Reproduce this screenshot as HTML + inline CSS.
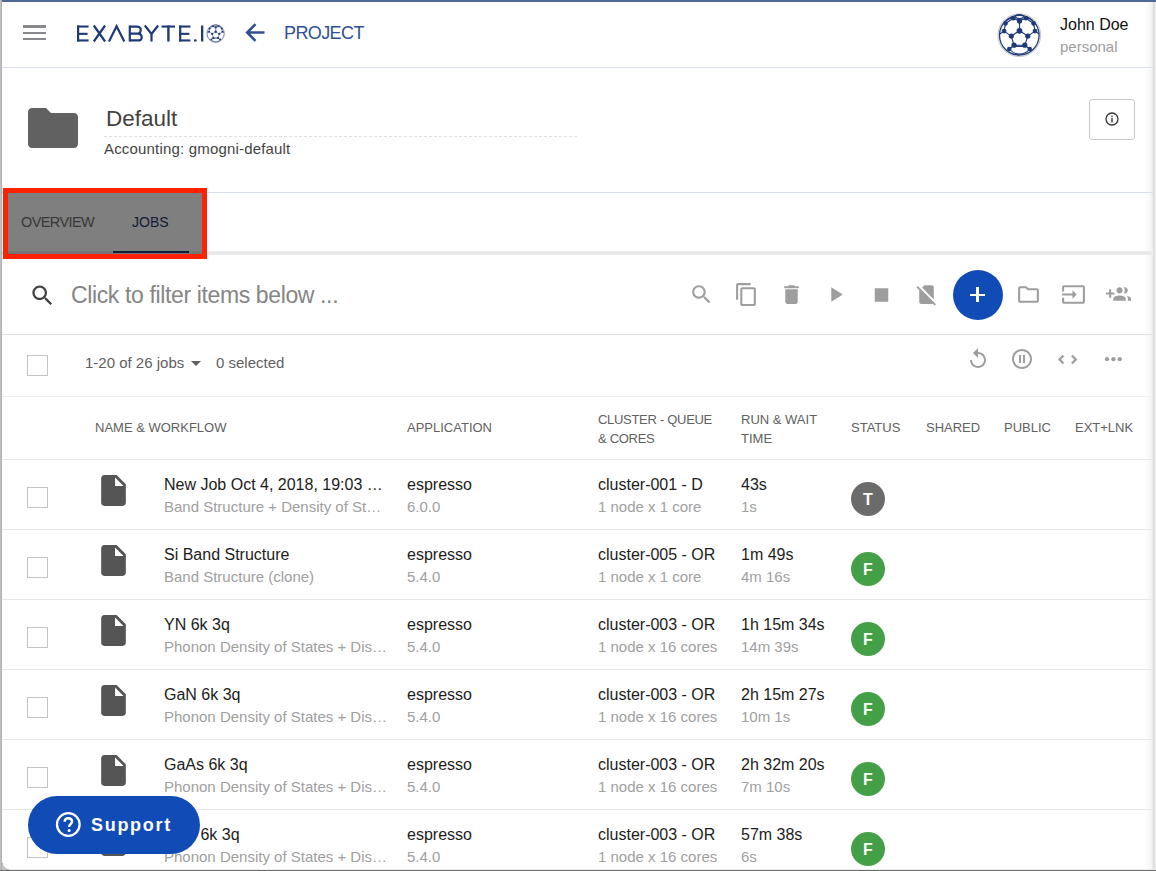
<!DOCTYPE html>
<html><head><meta charset="utf-8">
<style>
html,body{margin:0;padding:0;}
body{width:1156px;height:871px;overflow:hidden;position:relative;background:#fff;font-family:"Liberation Sans",sans-serif;color:#212121;}
.a{position:absolute;}
.t{position:absolute;white-space:nowrap;line-height:1;}
.hl{position:absolute;left:2px;width:1152px;height:1px;}
svg{position:absolute;overflow:visible;}
.ic{fill:#9e9e9e;}
.cb{position:absolute;width:19px;height:19px;border:1px solid #c4c4c4;background:#fff;}
.fi{position:absolute;width:25px;height:31px;}
.n1{font-size:16px;color:#1c1c1c;}
.n2{font-size:15px;color:#a0a0a0;}
.hd{font-size:13px;color:#616161;}
.st{position:absolute;width:34px;height:34px;border-radius:50%;background:#43a047;color:#fff;font-size:16px;font-weight:bold;text-align:center;line-height:35px;}
</style></head>
<body>

<!-- window frame -->
<div class="a" style="left:0;top:0;width:1156px;height:2px;background:#506a98;"></div>
<div class="a" style="left:0;top:0;width:2px;height:871px;background:linear-gradient(to right,#c8c8c8,#a8a8a8);"></div>
<div class="a" style="left:1144px;top:2px;width:12px;height:869px;background:linear-gradient(to right,rgba(0,0,0,0),rgba(0,0,0,0.04) 60%,rgba(0,0,0,0.14) 85%,rgba(0,0,0,0.03));"></div>
<div class="a" style="left:2px;top:869px;width:1154px;height:1px;background:#ececec;"></div><div class="a" style="left:0;top:870px;width:1156px;height:1px;background:#6e6e6e;"></div><div class="a" style="left:2px;top:863px;width:7px;height:7px;background:radial-gradient(circle at 100% 0,#fff 0,#fff 5.5px,#b8b8b8 6.5px,#c4c4c4 7px);"></div>

<!-- header -->
<div class="a" style="left:23px;top:25px;width:23px;height:3px;background:#88898d;"></div>
<div class="a" style="left:23px;top:32px;width:23px;height:2px;background:#88898d;"></div>
<div class="a" style="left:23px;top:38px;width:23px;height:2px;background:#88898d;"></div>

<svg style="left:72px;top:20px" width="160" height="26" viewBox="0 0 160 26">
<g fill="#1f3a78">
<rect x="5" y="5.5" width="2.2" height="16"/><rect x="5" y="5.5" width="11.6" height="2.1"/><rect x="5" y="12.8" width="10.6" height="2.1"/><rect x="5" y="19.4" width="11.6" height="2.1"/>
<rect x="56.7" y="5.5" width="2.2" height="16"/>
<rect x="89.5" y="5.5" width="13.5" height="2.1"/><rect x="95.2" y="5.5" width="2.4" height="16"/>
<rect x="107.1" y="5.5" width="2.2" height="16"/><rect x="107.1" y="5.5" width="11.3" height="2.1"/><rect x="107.1" y="12.8" width="10.3" height="2.1"/><rect x="107.1" y="19.4" width="11.3" height="2.1"/>
<rect x="122" y="19.4" width="2.6" height="2.1"/>
<rect x="129" y="5.5" width="2.3" height="16"/>
</g>
<g fill="none" stroke="#1f3a78" stroke-width="2.2">
<path d="M21.8 5.5L33.1 21.5 M33.1 5.5L21.8 21.5"/>
<path d="M37 21.5L44.6 6.2 52.3 21.5"/>
<path d="M57.8 6.55H64.8C67.6 6.55 68.7 8.3 68.7 10 C68.7 11.9 67.4 13.7 64.8 13.7H57.8 M57.8 13.7H65.8C68.6 13.7 69.7 15.6 69.7 17.4C69.7 19.3 68.4 20.45 65.8 20.45H57.8"/>
<path d="M72.8 5.5L79.5 13.9 86.2 5.5 M79.5 13.9V21.5"/>
</g>
</svg>
<svg style="left:206px;top:24px" width="19" height="19" viewBox="0 0 44 44">
<circle cx="22.3" cy="22.2" r="21.4" fill="#fff" stroke="#bdbdbd" stroke-width="0.9"/>
<circle cx="22.3" cy="22.2" r="19.8" fill="none" stroke="#1f3a78" stroke-width="1.3"/>
<g fill="none" stroke="#1f3a78" stroke-width="1.15">
<path d="M22.5 17.8L30.8 23.1 27.8 32.2 17 32.2 14.3 23.1Z"/>
<path d="M22.5 17.8V7.9 M22.5 7.9L16.2 5.2 M22.5 7.9L28.9 5.2 M16.2 5.2L8.5 10.4 M28.9 5.2L36.6 10.4 M8.5 10.4L7.1 18.1 M36.6 10.4L38 18.1 M7.1 18.1L14.3 23.1 M38 18.1L30.8 23.1 M17 32.2L12.3 36 M27.8 32.2L32.7 36 M7.1 18.1L3 21 M38 18.1L42 21"/>
<ellipse cx="22.5" cy="3.6" rx="4" ry="2"/>
<path d="M9.6 7.5L15 4.2 M35.4 7.5L30 4.2 M17 33.3H27.8 M12.3 36C15 39.5 19 41 22.5 41C26 41 30 39.5 32.7 36"/>
</g>
<g fill="#1f3a78">
<circle cx="22.5" cy="17.8" r="2.9"/><circle cx="30.8" cy="23.1" r="2.6"/><circle cx="27.8" cy="32.2" r="2.6"/><circle cx="17" cy="32.2" r="2.6"/><circle cx="14.3" cy="23.1" r="2.6"/>
<circle cx="22.5" cy="7.9" r="2.6"/><circle cx="16.2" cy="5.2" r="2.3"/><circle cx="28.9" cy="5.2" r="2.3"/><circle cx="8.5" cy="10.4" r="2.3"/><circle cx="36.6" cy="10.4" r="2.3"/>
<circle cx="7.1" cy="18.1" r="2.4"/><circle cx="38" cy="18.1" r="2.4"/><circle cx="12.3" cy="36" r="2.3"/><circle cx="32.7" cy="36" r="2.3"/>
</g></svg>

<svg style="left:245px;top:23px" width="20" height="19" viewBox="0 0 20 19"><path d="M19.5 9.5H2.5 M10.5 1.2L2.2 9.5 10.5 17.8" fill="none" stroke="#2f5192" stroke-width="2.6"/></svg>
<div class="t" style="left:284px;top:23.5px;font-size:18px;letter-spacing:-0.6px;color:#2f5192;">PROJECT</div>

<svg style="left:997px;top:13px" width="44" height="44" viewBox="0 0 44 44">
<circle cx="22.3" cy="22.2" r="21.4" fill="#fff" stroke="#bdbdbd" stroke-width="0.9"/>
<circle cx="22.3" cy="22.2" r="19.8" fill="none" stroke="#1f3a78" stroke-width="1.3"/>
<g fill="none" stroke="#1f3a78" stroke-width="1.15">
<path d="M22.5 17.8L30.8 23.1 27.8 32.2 17 32.2 14.3 23.1Z"/>
<path d="M22.5 17.8V7.9 M22.5 7.9L16.2 5.2 M22.5 7.9L28.9 5.2 M16.2 5.2L8.5 10.4 M28.9 5.2L36.6 10.4 M8.5 10.4L7.1 18.1 M36.6 10.4L38 18.1 M7.1 18.1L14.3 23.1 M38 18.1L30.8 23.1 M17 32.2L12.3 36 M27.8 32.2L32.7 36 M7.1 18.1L3 21 M38 18.1L42 21"/>
<ellipse cx="22.5" cy="3.6" rx="4" ry="2"/>
<path d="M9.6 7.5L15 4.2 M35.4 7.5L30 4.2 M17 33.3H27.8 M12.3 36C15 39.5 19 41 22.5 41C26 41 30 39.5 32.7 36"/>
</g>
<g fill="#1f3a78">
<circle cx="22.5" cy="17.8" r="2.9"/><circle cx="30.8" cy="23.1" r="2.6"/><circle cx="27.8" cy="32.2" r="2.6"/><circle cx="17" cy="32.2" r="2.6"/><circle cx="14.3" cy="23.1" r="2.6"/>
<circle cx="22.5" cy="7.9" r="2.6"/><circle cx="16.2" cy="5.2" r="2.3"/><circle cx="28.9" cy="5.2" r="2.3"/><circle cx="8.5" cy="10.4" r="2.3"/><circle cx="36.6" cy="10.4" r="2.3"/>
<circle cx="7.1" cy="18.1" r="2.4"/><circle cx="38" cy="18.1" r="2.4"/><circle cx="12.3" cy="36" r="2.3"/><circle cx="32.7" cy="36" r="2.3"/>
</g></svg>
<div class="t" style="left:1060px;top:17px;font-size:16px;color:#111;">John Doe</div>
<div class="t" style="left:1060px;top:39px;font-size:15px;color:#9e9e9e;">personal</div>

<div class="hl" style="top:67px;background:#d7dee8;"></div>

<!-- project info -->
<svg style="left:28px;top:108px" width="50" height="40" viewBox="0 0 50 40"><path d="M4 0H18L23 5H46C48.2 5 50 6.8 50 9V36C50 38.2 48.2 40 46 40H4C1.8 40 0 38.2 0 36V4C0 1.8 1.8 0 4 0Z" fill="#616161"/></svg>
<div class="t" style="left:106px;top:108px;font-size:22.5px;color:#424242;">Default</div>
<div class="a" style="left:104px;top:136px;width:474px;height:1px;background:repeating-linear-gradient(to right,#e0e0e0 0 3px,transparent 3px 5px);"></div>
<div class="t" style="left:104px;top:141px;font-size:15px;letter-spacing:0.18px;color:#444;">Accounting: gmogni-default</div>
<div class="a" style="left:1089px;top:99px;width:44px;height:39px;border:1px solid #c8c8c8;border-radius:3px;"></div>
<svg style="left:1105px;top:112px" width="14" height="14" viewBox="0 0 14 14"><circle cx="7" cy="7" r="6" fill="none" stroke="#333" stroke-width="1.3"/><rect x="6.3" y="5.8" width="1.4" height="4.6" fill="#333"/><rect x="6.3" y="3.4" width="1.4" height="1.4" fill="#333"/></svg>

<div class="hl" style="top:192px;background:#d7dee8;"></div>

<!-- tabs -->
<div class="t" style="left:21px;top:214.5px;font-size:14.5px;letter-spacing:-0.6px;color:#727272;">OVERVIEW</div>
<div class="t" style="left:132px;top:215px;font-size:14px;color:#1f3a6e;">JOBS</div>
<div class="a" style="left:113px;top:251px;width:76px;height:2px;background:#1f3a6e;"></div>
<div class="a" style="left:2px;top:251px;width:1152px;height:4px;background:linear-gradient(#f2f2f2,#e8e8e8 30%,#e8e8e8 80%,#f0f0f0);"></div>
<div class="a" style="left:113px;top:251px;width:76px;height:2px;background:#1f3a6e;"></div>
<div class="a" style="left:3px;top:187.7px;width:194px;height:61.5px;border:5px solid #ff2200;background:rgba(0,0,0,0.5);"></div>

<!-- search row -->
<svg style="left:28.7px;top:281.8px" width="27" height="27" viewBox="0 0 24 24"><path fill="#424242" d="M15.5 14h-.79l-.28-.27C15.41 12.59 16 11.11 16 9.5 16 5.91 13.09 3 9.5 3S3 5.91 3 9.5 5.91 16 9.5 16c1.61 0 3.09-.59 4.23-1.57l.27.28v.79l5 4.99L20.49 19l-4.99-5zm-6 0C7.01 14 5 11.99 5 9.5S7.01 5 9.5 5 14 7.01 14 9.5 11.99 14 9.5 14z"/></svg>
<div class="t" style="left:71px;top:284.2px;font-size:23px;letter-spacing:-0.37px;color:#858585;">Click to filter items below ...</div>

<svg style="left:689.00px;top:281.80px" width="25" height="25" viewBox="0 0 24 24"><path class="ic" d="M15.5 14h-.79l-.28-.27C15.41 12.59 16 11.11 16 9.5 16 5.910 13.09 3 9.5 3S3 5.91 3 9.5 5.91 16 9.5 16c1.61 0 3.09-.59 4.23-1.57l.27.28v.79l5 4.99L20.49 19l-4.99-5zm-6 0C7.01 14 5 11.99 5 9.5S7.01 5 9.5 5 14 7.01 14 9.5 11.99 14 9.5 14z"/></svg>
<svg style="left:733.50px;top:281.80px" width="25" height="25" viewBox="0 0 24 24"><path class="ic" d="M16 1H4c-1.1 0-2 .9-2 2v14h2V3h12V1zm3 4H8c-1.1 0-2 .9-2 2v14c0 1.1.9 2 2 2h11c1.1 0 2-.9 2-2V7c0-1.1-.9-2-2-2zm0 16H8V7h11v14z"/></svg>
<svg style="left:778.50px;top:281.80px" width="25" height="25" viewBox="0 0 24 24"><path class="ic" d="M6 19c0 1.1.9 2 2 2h8c1.1 0 2-.9 2-2V7H6v12zM19 4h-3.5l-1-1h-5l-1 1H5v2h14V4z"/></svg>
<svg style="left:822.50px;top:281.80px" width="25" height="25" viewBox="0 0 24 24"><path class="ic" d="M8 5v14l11-7z"/></svg>
<svg style="left:868.50px;top:281.80px" width="25" height="25" viewBox="0 0 24 24"><path class="ic" d="M5.5 6h13v13h-13z"/></svg>
<svg style="left:913.50px;top:281.80px" width="25" height="25" viewBox="0 0 24 24"><path class="ic" d="M18.99 5c0-1.1-.89-2-1.99-2h-7L7.66 5.34 19 16.68 18.99 5zM3.65 3.88L2.38 5.15 5 7.77V19c0 1.1.9 2 2 2h10.01c.35 0 .67-.1.96-.26l1.88 1.88 1.27-1.27L3.65 3.88z"/></svg>
<div class="a" style="left:953px;top:270px;width:50px;height:50px;border-radius:50%;background:#114cb6;"></div>
<div class="a" style="left:970px;top:293.5px;width:15px;height:2.6px;background:#fff;"></div>
<div class="a" style="left:976.2px;top:287.3px;width:2.6px;height:15px;background:#fff;"></div>
<svg style="left:1016.00px;top:281.80px" width="25" height="25" viewBox="0 0 24 24"><path class="ic" d="M9.17 6l2 2H20v10H4V6h5.17M10 4H4c-1.1 0-1.99.9-1.99 2L2 18c0 1.1.9 2 2 2h16c1.1 0 2-.9 2-2V8c0-1.1-.9-2-2-2h-8l-2-2z"/></svg>
<svg style="left:1061.00px;top:281.80px" width="25" height="25" viewBox="0 0 24 24"><path class="ic" d="M21 3.01H3c-1.1 0-2 .9-2 2V9h2V4.99h18v14.03H3V15H1v4.01c0 1.1.9 1.98 2 1.98h18c1.1 0 2-.88 2-1.98v-14c0-1.11-.9-2-2-2zM11 16l4-4-4-4v3H1v2h10v3z"/></svg>
<svg style="left:1105.50px;top:281.80px" width="25" height="25" viewBox="0 0 24 24"><path class="ic" d="M8 10H5V7H3v3H0v2h3v3h2v-3h3v-2zm10 1c1.66 0 2.99-1.34 2.99-3S19.66 5 18 5c-.32 0-.63.05-.91.14.57.81.9 1.790.9 2.86s-.34 2.04-.9 2.86c.28.09.59.14.91.14zm-5 0c1.66 0 2.99-1.34 2.99-3S14.66 5 13 5c-1.66 0-3 1.34-3 3s1.34 3 3 3zm6.62 2.16c.83.73 1.38 1.66 1.38 2.84v2h3v-2c0-1.54-2.370-2.49-4.38-2.84zM13 13c-2 0-6 1-6 3v2h12v-2c0-2-4-3-6-3z"/></svg>

<div class="hl" style="top:334px;background:#e0e0e0;"></div>

<!-- selection row -->
<div class="cb" style="left:27px;top:355px;"></div>
<div class="t" style="left:85px;top:355px;font-size:15px;color:#616161;">1-20 of 26 jobs</div>
<svg style="left:191px;top:361px" width="10" height="5" viewBox="0 0 10 5"><path d="M0 0H10L5 5Z" fill="#616161"/></svg>
<div class="t" style="left:216px;top:355px;font-size:15px;color:#616161;">0 selected</div>

<svg style="left:966px;top:347.1px" width="24" height="24" viewBox="0 0 24 24"><path class="ic" d="M12 5V1L7 6l5 5V7c3.31 0 6 2.69 6 6s-2.69 6-6 6-6-2.69-6-6H4c0 4.42 3.58 8 8 8s8-3.58 8-8-3.58-8-8-8z"/></svg>
<svg style="left:1010px;top:346.7px" width="24" height="24" viewBox="0 0 24 24"><path class="ic" d="M9 16h2V8H9v8zm3-14C6.48 2 2 6.48 2 12s4.48 10 10 10 10-4.48 10-10S17.52 2 12 2zm0 18c-4.41 0-8-3.59-8-8s3.59-8 8-8 8 3.59 8 8-3.59 8-8 8zm1-4h2V8h-2v8z"/></svg>
<svg style="left:1058px;top:355px" width="19" height="9" viewBox="0 0 19 9"><path d="M5.4 0.5L1.5 4.5 5.4 8.5 M13.9 0.5L17.8 4.5 13.9 8.5" fill="none" stroke="#9e9e9e" stroke-width="2.3"/></svg>
<svg style="left:1104.8px;top:357px" width="17" height="5" viewBox="0 0 17 5"><circle cx="2" cy="2.2" r="2.1" class="ic"/><circle cx="8.4" cy="2.2" r="2.1" class="ic"/><circle cx="14.8" cy="2.2" r="2.1" class="ic"/></svg>

<div class="hl" style="top:396px;background:#eeeeee;"></div>

<!-- table header -->
<div class="t hd" style="left:95px;top:421px;">NAME &amp; WORKFLOW</div>
<div class="t hd" style="left:407px;top:421px;">APPLICATION</div>
<div class="t hd" style="left:598px;top:409.5px;line-height:19px;letter-spacing:-0.3px;">CLUSTER - QUEUE<br>&amp; CORES</div>
<div class="t hd" style="left:741px;top:409.5px;line-height:19px;">RUN &amp; WAIT<br>TIME</div>
<div class="t hd" style="left:851px;top:421px;">STATUS</div>
<div class="t hd" style="left:926px;top:421px;">SHARED</div>
<div class="t hd" style="left:1004px;top:421px;">PUBLIC</div>
<div class="t hd" style="left:1075px;top:421px;">EXT+LNK</div>

<div class="hl" style="top:459px;background:#e8e8e8;"></div>

<div id="rows">
<div class="cb" style="left:27px;top:487px;"></div>
<svg style="left:95px;top:472px" width="37" height="37" viewBox="0 0 24 24"><path fill="#555" d="M6 2c-1.1 0-1.99.9-1.99 2L4 20c0 1.1.89 2 1.99 2H18c1.1 0 2-.9 2-2V8l-6-6H6zm7 7V3.5L18.5 9H13z"/></svg>
<div class="t n1" style="left:164px;top:477px;">New Job Oct 4, 2018, 19:03 …</div>
<div class="t n2" style="left:164px;top:499px;">Band Structure + Density of St…</div>
<div class="t n1" style="left:407px;top:477px;">espresso</div>
<div class="t n2" style="left:407px;top:499px;">6.0.0</div>
<div class="t n1" style="left:598px;top:477px;">cluster-001 - D</div>
<div class="t n2" style="left:598px;top:499px;">1 node x 1 core</div>
<div class="t n1" style="left:741px;top:477px;">43s</div>
<div class="t n2" style="left:741px;top:499px;">1s</div>
<div class="st" style="left:851px;top:482px;background:#6b6b6b;">T</div>
<div class="hl" style="top:529px;background:#e8e8e8;"></div>
<div class="cb" style="left:27px;top:557px;"></div>
<svg style="left:95px;top:542px" width="37" height="37" viewBox="0 0 24 24"><path fill="#555" d="M6 2c-1.1 0-1.99.9-1.99 2L4 20c0 1.1.89 2 1.99 2H18c1.1 0 2-.9 2-2V8l-6-6H6zm7 7V3.5L18.5 9H13z"/></svg>
<div class="t n1" style="left:164px;top:547px;">Si Band Structure</div>
<div class="t n2" style="left:164px;top:569px;">Band Structure (clone)</div>
<div class="t n1" style="left:407px;top:547px;">espresso</div>
<div class="t n2" style="left:407px;top:569px;">5.4.0</div>
<div class="t n1" style="left:598px;top:547px;">cluster-005 - OR</div>
<div class="t n2" style="left:598px;top:569px;">1 node x 1 core</div>
<div class="t n1" style="left:741px;top:547px;">1m 49s</div>
<div class="t n2" style="left:741px;top:569px;">4m 16s</div>
<div class="st" style="left:851px;top:552px;background:#43a047;">F</div>
<div class="hl" style="top:599px;background:#e8e8e8;"></div>
<div class="cb" style="left:27px;top:627px;"></div>
<svg style="left:95px;top:612px" width="37" height="37" viewBox="0 0 24 24"><path fill="#555" d="M6 2c-1.1 0-1.99.9-1.99 2L4 20c0 1.1.89 2 1.99 2H18c1.1 0 2-.9 2-2V8l-6-6H6zm7 7V3.5L18.5 9H13z"/></svg>
<div class="t n1" style="left:164px;top:617px;">YN 6k 3q</div>
<div class="t n2" style="left:164px;top:639px;">Phonon Density of States + Dis…</div>
<div class="t n1" style="left:407px;top:617px;">espresso</div>
<div class="t n2" style="left:407px;top:639px;">5.4.0</div>
<div class="t n1" style="left:598px;top:617px;">cluster-003 - OR</div>
<div class="t n2" style="left:598px;top:639px;">1 node x 16 cores</div>
<div class="t n1" style="left:741px;top:617px;">1h 15m 34s</div>
<div class="t n2" style="left:741px;top:639px;">14m 39s</div>
<div class="st" style="left:851px;top:622px;background:#43a047;">F</div>
<div class="hl" style="top:669px;background:#e8e8e8;"></div>
<div class="cb" style="left:27px;top:697px;"></div>
<svg style="left:95px;top:682px" width="37" height="37" viewBox="0 0 24 24"><path fill="#555" d="M6 2c-1.1 0-1.99.9-1.99 2L4 20c0 1.1.89 2 1.99 2H18c1.1 0 2-.9 2-2V8l-6-6H6zm7 7V3.5L18.5 9H13z"/></svg>
<div class="t n1" style="left:164px;top:687px;">GaN 6k 3q</div>
<div class="t n2" style="left:164px;top:709px;">Phonon Density of States + Dis…</div>
<div class="t n1" style="left:407px;top:687px;">espresso</div>
<div class="t n2" style="left:407px;top:709px;">5.4.0</div>
<div class="t n1" style="left:598px;top:687px;">cluster-003 - OR</div>
<div class="t n2" style="left:598px;top:709px;">1 node x 16 cores</div>
<div class="t n1" style="left:741px;top:687px;">2h 15m 27s</div>
<div class="t n2" style="left:741px;top:709px;">10m 1s</div>
<div class="st" style="left:851px;top:692px;background:#43a047;">F</div>
<div class="hl" style="top:739px;background:#e8e8e8;"></div>
<div class="cb" style="left:27px;top:767px;"></div>
<svg style="left:95px;top:752px" width="37" height="37" viewBox="0 0 24 24"><path fill="#555" d="M6 2c-1.1 0-1.99.9-1.99 2L4 20c0 1.1.89 2 1.99 2H18c1.1 0 2-.9 2-2V8l-6-6H6zm7 7V3.5L18.5 9H13z"/></svg>
<div class="t n1" style="left:164px;top:757px;">GaAs 6k 3q</div>
<div class="t n2" style="left:164px;top:779px;">Phonon Density of States + Dis…</div>
<div class="t n1" style="left:407px;top:757px;">espresso</div>
<div class="t n2" style="left:407px;top:779px;">5.4.0</div>
<div class="t n1" style="left:598px;top:757px;">cluster-003 - OR</div>
<div class="t n2" style="left:598px;top:779px;">1 node x 16 cores</div>
<div class="t n1" style="left:741px;top:757px;">2h 32m 20s</div>
<div class="t n2" style="left:741px;top:779px;">7m 10s</div>
<div class="st" style="left:851px;top:762px;background:#43a047;">F</div>
<div class="hl" style="top:809px;background:#e8e8e8;"></div>
<div class="cb" style="left:27px;top:837px;"></div>
<svg style="left:95px;top:822px" width="37" height="37" viewBox="0 0 24 24"><path fill="#555" d="M6 2c-1.1 0-1.99.9-1.99 2L4 20c0 1.1.89 2 1.99 2H18c1.1 0 2-.9 2-2V8l-6-6H6zm7 7V3.5L18.5 9H13z"/></svg>
<div class="t n1" style="left:164px;top:827px;">InAs 6k 3q</div>
<div class="t n2" style="left:164px;top:849px;">Phonon Density of States + Dis…</div>
<div class="t n1" style="left:407px;top:827px;">espresso</div>
<div class="t n2" style="left:407px;top:849px;">5.4.0</div>
<div class="t n1" style="left:598px;top:827px;">cluster-003 - OR</div>
<div class="t n2" style="left:598px;top:849px;">1 node x 16 cores</div>
<div class="t n1" style="left:741px;top:827px;">57m 38s</div>
<div class="t n2" style="left:741px;top:849px;">6s</div>
<div class="st" style="left:851px;top:832px;background:#43a047;">F</div>
</div><!--endrows-->

<!-- support -->
<div class="a" style="left:28px;top:796px;width:172px;height:58px;border-radius:29px;background:#114cb6;"></div>
<svg style="left:55px;top:811px" width="27" height="27" viewBox="0 0 27 27"><circle cx="13.3" cy="13.5" r="11.3" fill="none" stroke="#fff" stroke-width="2.3"/><path d="M9.6 10.8C9.6 8.6 11.3 7.3 13.3 7.3 15.4 7.3 17 8.6 17 10.6 17 13.2 14.1 13.3 14.1 16.1" fill="none" stroke="#fff" stroke-width="2.4"/><circle cx="14.1" cy="19.6" r="1.5" fill="#fff"/></svg>
<div class="t" style="left:91px;top:816px;font-size:18px;font-weight:bold;color:#fff;letter-spacing:1.7px;">Support</div>
</body></html>
